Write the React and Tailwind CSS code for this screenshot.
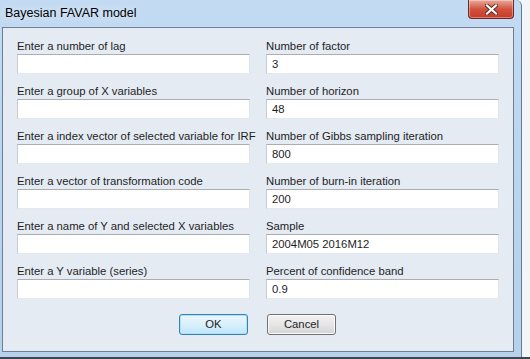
const LEFT = [
  { label: "Enter a number of lag", value: "" },
  { label: "Enter a group of X variables", value: "" },
  { label: "Enter a index vector of selected variable for IRF", value: "" },
  { label: "Enter a vector of transformation code", value: "" },
  { label: "Enter a name of Y and selected X variables", value: "" },
  { label: "Enter a Y variable (series)", value: "" },
];

const RIGHT = [
  { label: "Number of factor", value: "3" },
  { label: "Number of horizon", value: "48" },
  { label: "Number of Gibbs sampling iteration", value: "800" },
  { label: "Number of burn-in iteration", value: "200" },
  { label: "Sample", value: "2004M05 2016M12" },
  { label: "Percent of confidence band", value: "0.9" },
];

function Field({ label, value }) {
  return (
    <div className="flex w-[233px] flex-col">
      <div className="h-[15px] whitespace-nowrap text-[11.3px] leading-[15px] text-[#1e1e1e]">{label}</div>
      <div className="h-[20px] w-[233px] border border-t-[#abadb3] border-l-[#c9cbd2] border-r-[#e2e3ea] border-b-[#e3e9ef] bg-white pl-[5px] text-[11.3px] leading-[18px] text-[#1e1e1e]">
        {value}
      </div>
    </div>
  );
}

function CloseButton() {
  return (
    <div className="flex h-[19px] w-[46px] items-center justify-center rounded-b-[4px] border border-t-0 border-[#6b2a22] bg-gradient-to-b from-[#e9a99c] via-[#d0533f] to-[#c73a25] shadow-[inset_0_0_0_1px_rgba(255,255,255,0.35)]">
      <svg width="13" height="11" viewBox="0 0 13 11">
        <path d="M2 1.5 L11 9.5 M11 1.5 L2 9.5" stroke="#5a2a24" strokeWidth="4" strokeLinecap="square" />
        <path d="M2 1.5 L11 9.5 M11 1.5 L2 9.5" stroke="#ffffff" strokeWidth="2.2" strokeLinecap="square" />
      </svg>
    </div>
  );
}

export default function App() {
  return (
    <div className="h-[359px] w-[530px] overflow-hidden bg-[#f3f5f8] font-['Liberation_Sans',Arial,sans-serif]">
      <div className="h-[357px] w-[522px] rounded-tr-[6px] border-r border-r-[#5f7d9c] bg-gradient-to-b from-[#c2daf2] via-[#bcd5ee] to-[#b7d0eb]">
        <div className="flex h-[27px] items-start justify-between pr-[7px]">
          <div className="pl-[5px] pt-[4px] text-[12.5px] leading-[18px] text-black [text-shadow:0_0_8px_rgba(255,255,255,0.9)]">
            Bayesian FAVAR model
          </div>
          <CloseButton />
        </div>
        <div className="ml-[2px] h-[325px] w-[512px] border border-[#6e7f95] bg-[#e5ebf3] pl-[14px] pt-[11px]">
          <div className="flex gap-x-[16px]">
            <div className="flex flex-col gap-y-[10px]">
              {LEFT.map((f) => (
                <Field key={f.label} {...f} />
              ))}
            </div>
            <div className="flex flex-col gap-y-[10px]">
              {RIGHT.map((f) => (
                <Field key={f.label} {...f} />
              ))}
            </div>
          </div>
          <div className="mt-[15px] flex gap-x-[19px] pl-[162px]">
            <button className="h-[21px] w-[69px] rounded-[3px] border border-[#3c7fb1] bg-gradient-to-b from-[#eaf6fd] via-[#d9f0fc] to-[#bee6fd] text-[11.3px] text-[#1e1e1e] shadow-[inset_0_0_0_1px_#a8e4fb]">
              OK
            </button>
            <button className="h-[21px] w-[69px] rounded-[3px] border border-[#707070] bg-gradient-to-b from-[#f2f2f2] via-[#e6e6e6] to-[#d4d4d4] text-[11.3px] text-[#1e1e1e] shadow-[inset_0_0_0_1px_#fcfcfc]">
              Cancel
            </button>
          </div>
        </div>
      </div>
      <div className="h-[2px] w-[530px] bg-[#3b4752]" />
    </div>
  );
}
